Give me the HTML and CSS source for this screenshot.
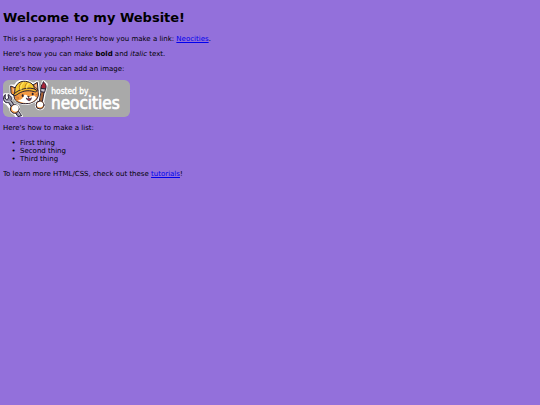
FILE: index.html
```html
<!DOCTYPE html>
<html lang="en">
<head>
  <meta charset="UTF-8">
  <meta name="viewport" content="width=device-width, initial-scale=1.0">
  <title>My Website</title>
  <link rel="stylesheet" href="styles.css">
</head>
<body>
  <h1>Welcome to my Website!</h1>

  <p>This is a paragraph! Here's how you make a link: <a href="https://neocities.org">Neocities</a>.</p>

  <p>Here's how you can make <strong>bold</strong> and <em>italic</em> text.</p>

  <p>Here's how you can add an image:</p>

  <svg class="site-button" viewBox="0 0 381 111" role="img" aria-label="Hosted by Neocities">
    <defs>
      <clipPath id="badge"><rect width="381" height="111" rx="17"/></clipPath>
    </defs>
    <rect width="381" height="111" rx="17" fill="#a9a9a9"/>
    <g clip-path="url(#badge)" stroke-linejoin="round" stroke-linecap="round">
      <!-- white sticker edge -->
      <g fill="#fff" stroke="#fff" stroke-width="9">
        <path d="M24 18 L36 19 C42 5 58 -1 72 4 L91 13 L103 7 L106 32 C111 48 100 62 84 68 C62 75 38 66 32 49 L25 44 Z"/>
        <path d="M121 5 L130 13 L125 34 L117 76 L106 81 L114 34 Z"/>
        <circle cx="111" cy="75" r="11"/>
        <path d="M5 44 L16 44 L24 56 L22 68 L55 108 L44 112 L14 72 L4 65 Z"/>
        <circle cx="35" cy="87" r="12"/>
      </g>
      <!-- head -->
      <g stroke="#282034" stroke-width="3">
        <path d="M34 48 L24 40 L23 18 L43 26 Z" fill="#ee9038"/>
        <path d="M87 17 L103 7 L105 32 Z" fill="#ee9038"/>
        <path d="M34 42 C28 62 48 72 68 71 C91 71 109 57 106 38 C104 20 89 13 73 15 C49 17 37 27 34 42 Z" fill="#f49a42"/>
      </g>
      <path d="M64 45 C70 43 73 46 76 52 C86 47 98 46 101 50 C97 62 85 69 69 69 C57 69 48 65 45 60 C54 61 61 54 64 45 Z" fill="#fff"/>
      <path d="M28 24 L38 29 L30 37 Z M94 18 L101 12 L101 25 Z" fill="#f9bd97"/>
      <!-- hard hat -->
      <g stroke="#282034" stroke-width="3">
        <path d="M36 41 C31 18 48 1 68 4 C84 6 94 15 94 27 C75 23 53 29 36 41 Z" fill="#f5c72f"/>
        <path d="M32 43 C45 28 78 18 99 29 C103 35 99 37 94 35 C73 29 57 33 42 44 C36 48 29 48 32 43 Z" fill="#f0b52c"/>
      </g>
      <path d="M50 29 C47 19 50 12 57 8 M66 24 C66 16 69 11 73 8" fill="none" stroke="#b77b26" stroke-width="3"/>
      <path d="M54 28 C52 20 54 14 61 8 M71 24 C71 17 74 13 78 11" fill="none" stroke="#ffe35e" stroke-width="4"/>
      <!-- face -->
      <ellipse cx="59" cy="47" rx="3" ry="4" fill="#282034"/>
      <ellipse cx="89" cy="42" rx="3" ry="4" fill="#282034"/>
      <path d="M72 49 L80 48 L77 53 Z" fill="#282034"/>
      <path d="M70 55 C73 58 76 56 77 53 C80 57 83 56 85 53 C85 59 82 62 79 62 C75 62 72 60 70 55 Z" fill="#9e3640" stroke="#282034" stroke-width="2"/>
      <path d="M38 51 L47 52 M39 58 L47 56 M99 44 L105 42 M97 49 L103 49" stroke="#b7652f" stroke-width="2"/>
      <!-- paintbrush -->
      <g stroke="#282034" stroke-width="3">
        <path d="M116 32 L124 33 L118 65 L108 72 Z" fill="#a96234"/>
        <path d="M115 23 L128 25 L125 37 L114 35 Z" fill="#c8c4cd"/>
        <path d="M114 24 C113 14 120 13 121 5 C127 10 132 18 128 26 Z" fill="#a82639"/>
        <circle cx="111" cy="75" r="12" fill="#f29b43"/>
      </g>
      <path d="M102 74 C102 64 116 62 120 70 C123 79 115 84 108 82 C103 80 101 78 102 74 Z" fill="#fff"/>
      <!-- wrench -->
      <path d="M6 44 C1 47 0 59 4 64 C7 68 12 69 16 67 L45 110 L56 107 L24 62 C28 54 23 45 15 44 L17 55 L11 59 L7 55 Z" fill="#8c8b9c" stroke="#282034" stroke-width="3"/>
      <path d="M5 59 L12 65 L20 63 L50 104" fill="none" stroke="#c5c4cf" stroke-width="3"/>
      <circle cx="35" cy="87" r="13" fill="#f29b43" stroke="#282034" stroke-width="3"/>
      <circle cx="37" cy="85" r="10" fill="#fff"/>
    </g>
    <text class="hosted" x="145" y="43">hosted by</text>
    <text class="neocities" x="144" y="86">neocities</text>
  </svg>

  <p>Here's how to make a list:</p>

  <ul>
    <li>First thing</li>
    <li>Second thing</li>
    <li>Third thing</li>
  </ul>

  <p>To learn more HTML/CSS, check out these <a href="https://neocities.org/tutorials">tutorials</a>!</p>
</body>
</html>
```
FILE: styles.css
```css
body {
  margin: 3px;
  background-color: mediumpurple;
  color: black;
  font-family: Verdana, "DejaVu Sans", sans-serif;
  font-size: 7px;
  line-height: 8px;
}

h1 {
  margin: 7px 0 9px;
  font-size: 13px;
  line-height: 16px;
}

p,
ul {
  margin: 7px 0;
}

ul {
  padding-left: 17px;
  list-style-type: "•  ";
}

a {
  color: #0000ee;
}

.site-button {
  display: block;
  width: 127px;
  height: auto;
}

.site-button text {
  font-family: "DejaVu Sans Condensed", "Open Sans", sans-serif;
  fill: white;
  stroke: white;
}

.hosted {
  font-size: 25px;
  stroke-width: 1px;
}

.neocities {
  font-size: 51px;
  stroke-width: 2px;
}
```
